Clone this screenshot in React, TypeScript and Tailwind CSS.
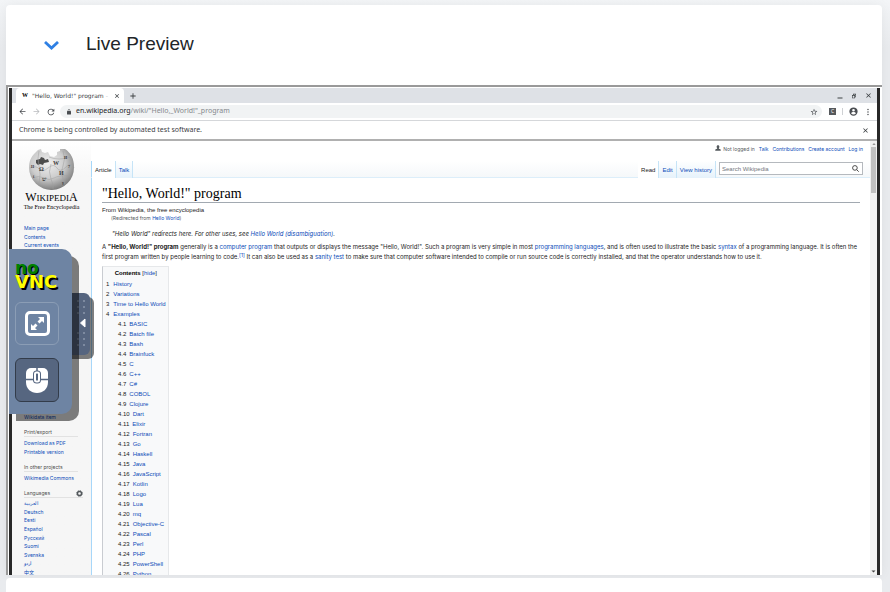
import type { ReactNode } from "react";

const ui = "font-['Noto_Sans','DejaVu_Sans',sans-serif]";
const side = "font-['Inter','Noto_Sans_CJK_SC',sans-serif] text-[5px]";
const arial = "font-['Liberation_Sans',Arial,sans-serif]";

function A({ children }: { children: ReactNode }) {
  return (
    <a href="#" className="text-[#0b4bb8]">
      {children}
    </a>
  );
}

function Icon({ d, className = "size-2" }: { d: string; className?: string }) {
  return (
    <svg viewBox="0 0 24 24" className={`${className} shrink-0`} fill="currentColor" aria-hidden="true">
      <path d={d} />
    </svg>
  );
}

const icons = {
  back: "M20 11H7.8l5.6-5.6L12 4l-8 8 8 8 1.4-1.4L7.8 13H20z",
  forward: "M4 11h12.2l-5.6-5.6L12 4l8 8-8 8-1.4-1.4 5.6-5.6H4z",
  reload:
    "M17.65 6.35A8 8 0 1 0 19.73 14h-2.08A6 6 0 1 1 12 6c1.66 0 3.14.69 4.22 1.78L13 11h7V4z",
  lock: "M18 8h-1V6a5 5 0 0 0-10 0v2H6a2 2 0 0 0-2 2v10a2 2 0 0 0 2 2h12a2 2 0 0 0 2-2V10a2 2 0 0 0-2-2zM9 6a3 3 0 0 1 6 0v2H9z",
  star: "M22 9.24l-7.19-.62L12 2 9.19 8.63 2 9.24l5.46 4.73L5.82 21 12 17.27 18.18 21l-1.63-7.03zM12 15.4l-3.76 2.27 1-4.28-3.32-2.88 4.38-.38L12 6.1l1.71 4.04 4.38.38-3.32 2.88 1 4.28z",
  account:
    "M12 1a11 11 0 1 0 0 22 11 11 0 0 0 0-22zm0 4a3.6 3.6 0 1 1 0 7.2A3.6 3.6 0 0 1 12 5zm0 15a8 8 0 0 1-6.500-3.500c.5-2 4.400-3 6.500-3s6 1 6.500 3A8 8 0 0 1 12 20z",
  more: "M12 7a2.200 2.200 0 1 0 0-4.400A2.200 2.200 0 0 0 12 7zm0 7.200a2.200 2.200 0 1 0 0-4.400 2.200 2.200 0 0 0 0 4.400zm0 7.200a2.200 2.200 0 1 0 0-4.400 2.200 2.200 0 0 0 0 4.400z",
  close: "M20 5.800L18.200 4 12 10.200 5.800 4 4 5.800 10.200 12 4 18.200 5.800 20l6.200-6.200 6.200 6.200 1.800-1.800-6.200-6.200z",
  plus: "M20 13.300h-6.700V20h-2.600v-6.700H4v-2.600h6.700V4h2.600v6.700H20z",
  minimize: "M2 18h20v4H2z",
  restore: "M8 3h12v14h-4v4H4V8h4zm2.500 5H16v6.500h1.500v-9h-7zM6.500 10.500v8h7v-8z",
  person: "M12 1c3.500 0 5.500 2.500 5.500 6 0 2.500-1 4.500-2 5.500v2l6 2.500c1 .5 1.500 2 1.500 6H1c0-4 .5-5.500 1.500-6l6-2.500v-2c-1-1-2-3-2-5.500 0-3.500 2-6 5.500-6z",
};

function TabStrip() {
  return (
    <div className="flex h-[15px] items-center bg-[#dee1e6] pl-1 text-[#3c4043]">
      <div className="flex h-full w-[108px] items-center rounded-t-[4px] bg-white pr-1 pl-[6px]">
        <span className="w-[10px] font-['Liberation_Serif',serif] text-[6px] font-bold text-black">W</span>
        <span className="mr-[2px] flex min-w-0 flex-1 gap-[2px] overflow-hidden font-['DejaVu_Sans',sans-serif] text-[6px] whitespace-nowrap">
          "Hello, World!" program <span className="text-[#c5c8cc]">-</span>
        </span>
        <button type="button" aria-label="Close tab">
          <Icon d={icons.close} className="size-[6px]" />
        </button>
      </div>
      <button type="button" aria-label="New tab" className="ml-[5px]">
        <Icon d={icons.plus} className="size-2" />
      </button>
      <div className="ml-auto flex items-center gap-2 pr-[5px]">
        <button type="button" aria-label="Minimize"><Icon d={icons.minimize} className="size-[6px]" /></button>
        <button type="button" aria-label="Restore"><Icon d={icons.restore} className="size-[6px]" /></button>
        <button type="button" aria-label="Close window"><Icon d={icons.close} className="size-[7px]" /></button>
      </div>
    </div>
  );
}

function Toolbar() {
  return (
    <div className="flex h-[18px] items-center border-b border-[#d5d7da] bg-white pr-[5px] pl-[6px] text-[#4a4d51]">
      <div className="flex gap-[5px]">
        <button type="button" aria-label="Back"><Icon d={icons.back} className="size-[9px]" /></button>
        <button type="button" aria-label="Forward" className="text-[#b9bbbe]"><Icon d={icons.forward} className="size-[9px]" /></button>
        <button type="button" aria-label="Reload"><Icon d={icons.reload} className="size-[10px]" /></button>
      </div>
      <div className="ml-1 flex h-[13px] min-w-0 flex-1 items-center gap-1 rounded-full bg-[#f1f3f4] pr-1 pl-[6px]">
        <Icon d={icons.lock} className="size-[6px]" />
        <div className="flex-1 text-[7px] whitespace-nowrap text-[#85888c]">
          <span className="text-[#202124]">en.wikipedia.org</span>/wiki/"Hello,_World!"_program
        </div>
        <button type="button" aria-label="Bookmark"><Icon d={icons.star} className="size-[8px]" /></button>
      </div>
      <span className="ml-[7px] flex size-[7px] items-center justify-center bg-[#56595c] text-[5px] text-white">C</span>
      <span className="mx-[6px] h-[7px] w-px bg-[#cfd1d4]" />
      <button type="button" aria-label="Profile"><Icon d={icons.account} className="size-[9px]" /></button>
      <button type="button" aria-label="Menu" className="ml-[6px]"><Icon d={icons.more} className="size-2" /></button>
    </div>
  );
}

function Globe() {
  return (
    <svg viewBox="0 0 46 42" className="h-[42px] w-[46px]" aria-label="Wikipedia globe">
      <defs>
        <radialGradient id="ball" cx="0.42" cy="0.35" r="0.68">
          <stop offset="0" stopColor="#efefef" />
          <stop offset="0.55" stopColor="#cccccc" />
          <stop offset="1" stopColor="#777777" />
        </radialGradient>
      </defs>
      <path
        d="M6 5l3-3 3-1 1 3 3 1 3-1 2 4 4 1 3-2 0-3 3-1 0-2 5 0c6 4 9 10 9 18a22.500 22.500 0 0 1-45 1C0 13 2 9 6 5z"
        fill="url(#ball)"
      />
      <path d="M7 12l4-1 1-2 3 1 1 2 3-1 1 3-5 1-1 2-3-1-2 1-2-2z" fill="#4c4c4c" />
      <g fill="none" stroke="#9f9f9f" strokeWidth="0.5">
        <path d="M1 20q6-3 9 1t9-1 9 0 9-1 8 1M3 30q7-3 12 0t10 0 16-2M10 3q-2 7 0 15t0 18M22 16q-3 8 0 15t2 10M34 3q3 8 0 15t2 18M20 9q9 4 22 0" />
      </g>
      <g fill="#3a3a3a" fontFamily="Liberation Serif" fontWeight="bold" fontSize="6">
        <text x="10" y="23">Ω</text>
        <text x="24" y="17">W</text>
        <text x="30" y="27">И</text>
        <text x="13" y="33">ש</text>
        <text x="35" y="11" fontSize="4">И</text>
        <text x="39" y="20" fontSize="4">7</text>
        <text x="2" y="20" fontSize="4">H</text>
        <text x="4" y="30" fontSize="4">ί</text>
        <text x="33" y="36" fontSize="4">γ</text>
      </g>
    </svg>
  );
}

function Heading({ children }: { children: ReactNode }) {
  return (
    <h3 className="mr-[13px] flex h-[9px] items-center justify-between border-b border-[#e2e2e2] text-[#4d4d4d]">
      {children}
    </h3>
  );
}

function Sidebar() {
  const langs = ["العربية", "Deutsch", "Eesti", "Español", "Русский", "Suomi", "Svenska", "اردو", "中文"];
  return (
    <aside className={`w-[79px] shrink-0 bg-linear-to-b from-white to-[#f6f6f6] to-8% pl-3 leading-[8px] ${side}`}>
      <div className="-ml-3 flex flex-col items-center pt-[7px]">
        <Globe />
        <div className="font-['Liberation_Serif',serif] text-[9px] leading-[14px] whitespace-nowrap text-black">
          <span className="text-[12px]">W</span>IKIPEDI<span className="text-[12px]">A</span>
        </div>
        <div className="font-['Liberation_Serif',serif] text-[6px] leading-[5px] whitespace-nowrap text-black">
          The Free Encyclopedia
        </div>
      </div>
      <ul className="mt-[14px] flex h-[25px] flex-col justify-between">
        <li><A>Main page</A></li>
        <li><A>Contents</A></li>
        <li><A>Current events</A></li>
      </ul>
      <div className="mt-[164px]"><A>Wikidata item</A></div>
      <div className="mt-[7px]"><Heading>Print/export</Heading></div>
      <ul className="mt-[2px] flex h-[17px] flex-col justify-between">
        <li><A>Download as PDF</A></li>
        <li><A>Printable version</A></li>
      </ul>
      <div className="mt-[7px]"><Heading>In other projects</Heading></div>
      <div className="mt-[2px]"><A>Wikimedia Commons</A></div>
      <div className="mt-[7px]">
        <h3 className="mr-2 flex h-[9px] items-center justify-between border-b border-[#e2e2e2] text-[#4d4d4d]">
          Languages
          <svg viewBox="0 0 24 24" className="size-[7px]" aria-hidden="true">
            <circle cx="12" cy="12" r="7" fill="none" stroke="#54595d" strokeWidth="5" />
            <circle cx="12" cy="12" r="10" fill="none" stroke="#54595d" strokeWidth="3" strokeDasharray="4 3.850" />
          </svg>
        </h3>
      </div>
      <ul className="mt-px flex h-[77px] flex-col justify-between">
        {langs.map((l) => (
          <li key={l} className="h-2"><A>{l}</A></li>
        ))}
      </ul>
    </aside>
  );
}

function ViewTab({ children, active = false }: { children: ReactNode; active?: boolean }) {
  return (
    <li
      className={`flex h-[17px] items-end border-r border-[#c6e4f7] px-[3px] pb-[4px] ${
        active ? "bg-white" : "bg-linear-to-b from-white to-[#e6f2fb]"
      }`}
    >
      {active ? <a href="#" className="text-[#222]">{children}</a> : <A>{children}</A>}
    </li>
  );
}

function PageHead() {
  return (
    <header className={`text-[6px] leading-[8px] ${arial}`}>
      <nav className="flex h-[20px] justify-end gap-1 bg-white pt-1 pr-[7px] font-['Inter',sans-serif] text-[5px]">
        <span className="flex gap-[2px] text-[#54595d]">
          <Icon d={icons.person} className="size-[6px]" />
          Not logged in
        </span>
        <A>Talk</A>
        <A>Contributions</A>
        <A>Create account</A>
        <A>Log in</A>
      </nav>
      <div className="flex h-[17px] border-b border-[#dceefa] bg-linear-to-b from-white to-[#f5f8fa]">
        <ul className="flex border-l border-[#a7d7f9]">
          <ViewTab active>Article</ViewTab>
          <ViewTab>Talk</ViewTab>
        </ul>
        <ul className="ml-auto flex">
          <ViewTab active>Read</ViewTab>
          <ViewTab>Edit</ViewTab>
          <ViewTab>View history</ViewTab>
        </ul>
        <label className="mt-px mr-[7px] ml-[3px] flex h-[13px] w-[144px] items-center border border-[#b5b9be] bg-white pr-[3px] pl-[2px] text-[#54595d]">
          <input
            type="text"
            aria-label="Search Wikipedia"
            placeholder="Search Wikipedia"
            className="h-[9px] min-w-0 flex-1 placeholder:text-[#72777d]"
          />
          <svg viewBox="0 0 24 24" className="size-[7px]" fill="none" stroke="#333" strokeWidth="3" aria-hidden="true">
            <circle cx="10" cy="10" r="8" />
            <path d="M16 16l7 7" />
          </svg>
        </label>
      </div>
    </header>
  );
}

const examples = [
  "BASIC", "Batch file", "Bash", "Brainfuck", "C", "C++", "C#", "COBOL", "Clojure", "Dart", "Elixir", "Fortran", "Go",
  "Haskell", "Java", "JavaScript", "Kotlin", "Logo", "Lua", "mq", "Objective-C", "Pascal", "Perl", "PHP", "PowerShell", "Python",
];

function Contents() {
  const top = ["History", "Variations", "Time to Hello World", "Examples"];
  return (
    <nav className={`mt-[4px] w-fit border border-[#e6e8ea] border-l-[#c9ccd1] bg-[#f8f9fa] pr-[2px] pl-[3px] text-[6px] leading-[10px] ${arial}`}>
      <div className="pt-px pb-px text-center">
        <b className="text-black">Contents</b> [<A>hide</A>]
      </div>
      <ol>
        {top.map((t, i) => (
          <li key={t} className="flex gap-[4px]">
            {i + 1} <A>{t}</A>
          </li>
        ))}
      </ol>
      <ol className="pl-3">
        {examples.map((t, i) => (
          <li key={t} className="flex gap-[3px]">
            4.{i + 1} <A>{t}</A>
          </li>
        ))}
      </ol>
    </nav>
  );
}

function Article() {
  return (
    <main className="flex-1 border-l border-[#a7d7f9] bg-white pr-[10px] pl-[10px] font-['Inter',sans-serif] text-[6px] text-[#222]">
      <h1 className="mt-[7px] h-[18px] border-b border-[#a2a9b1] font-['Liberation_Serif',serif] text-[14px] leading-[18px] text-black">
        "Hello, World!" program
      </h1>
      <div className={`mt-[3px] leading-[8px] ${arial}`}>From Wikipedia, the free encyclopedia</div>
      <div className="pl-[9px] text-[5px] leading-[8px] text-[#54595d]">
        (Redirected from <A>Hello World</A>)
      </div>
      <p className="mt-[7px] pl-[10px] leading-[10px] italic">
        "Hello World" redirects here. For other uses, see <A>Hello World (disambiguation)</A>.
      </p>
      <p className="mt-[3px] leading-[10px]">
        A <b>"Hello, World!" program</b> generally is a <A>computer program</A> that outputs or displays the message "Hello,
        World!". Such a program is very simple in most <A>programming languages</A>, and is often used to illustrate the
        basic <A>syntax</A> of a programming language. It is often the first program written by people learning to code.
        <sup className="text-[5px] leading-[0px]"><A>[1]</A></sup> It can also be used as a <A>sanity test</A> to make
        sure that computer software intended to compile or run source code is correctly installed, and that the operator
        understands how to use it.
      </p>
      <Contents />
    </main>
  );
}

function Scrollbar() {
  return (
    <div className="flex w-[7px] shrink-0 flex-col items-center bg-[#f1f1f1]">
      <svg viewBox="0 0 7 7" className="size-[6px]" aria-hidden="true"><path d="M1.500 4.500h4L3.500 2.500z" fill="#777" /></svg>
      <div className="h-[46px] w-[5px] bg-[#c1c1c1]" />
      <svg viewBox="0 0 7 7" className="mt-auto size-[7px]" aria-hidden="true"><path d="M1.500 2.500h4l-2 2z" fill="#444" /></svg>
    </div>
  );
}

function ControlBar() {
  return (
    <div className="absolute top-[162px] left-0">
      <button
        type="button"
        aria-label="Toggle control bar"
        className="absolute top-[44px] left-[55px] flex h-[62px] w-[26px] items-center justify-end rounded-r-[6px] bg-[#56657f] pr-px shadow-[4px_4px_0_rgba(0,0,0,0.5)]"
      >
        <svg viewBox="0 0 15 56" className="h-[56px] w-[15px]" aria-hidden="true">
          <g fill="#7d8aa0">
            {[4, 10, 16, 36, 42, 48].map((y) => (
              <g key={y}>
                <rect x="3" y={y} width="2" height="2" />
                <rect x="9" y={y} width="2" height="2" />
              </g>
            ))}
          </g>
          <path d="M6.500 27L11 23v8z" fill="#fff" stroke="#fff" strokeLinejoin="round" />
        </svg>
      </button>
      <div className="relative flex h-[165px] w-[63px] flex-col rounded-r-[10px] bg-[#6e84a3] pt-[13px] pl-[6px] shadow-[7px_7px_0_rgba(0,0,0,0.5)]">
        <div className="font-['DejaVu_Sans',sans-serif] leading-[13px] font-bold">
          <div className="text-[17px] text-[#008000] [text-shadow:1px_1px_0_#000]">no</div>
          <div className="text-[18px] text-[#ffff00] [text-shadow:2px_2px_0_#000]">VNC</div>
        </div>
        <button
          type="button"
          aria-label="Fullscreen"
          className="mt-[14px] flex h-[43px] w-[44px] items-center justify-center rounded-[6px] border border-[#8b9db5]"
        >
          <svg viewBox="0 0 25 25" className="size-[25px]" aria-hidden="true">
            <rect x="1.500" y="1.500" width="22" height="22" rx="3.500" fill="none" stroke="#fff" strokeWidth="3" />
            <path d="M13 6h6v6l-2-2-2.500 2.500-2-2L15 8zM6 13l2 2 2.500-2.500 2 2L10 17l2 2H6z" fill="#fff" />
          </svg>
        </button>
        <button
          type="button"
          aria-label="Mouse mode"
          className="mt-[13px] flex h-[44px] w-[44px] items-center justify-center rounded-[6px] border border-[#333c4a] bg-[#566680]"
        >
          <svg viewBox="0 0 22 25" className="h-[25px] w-[22px]" aria-hidden="true">
            <path d="M5 0h12a5 5 0 0 1 5 5v9c0 7-5 11-11 11S0 21 0 14V5a5 5 0 0 1 5-5z" fill="#fff" />
            <path d="M0 11.500h22M11 0v6" stroke="#566680" strokeWidth="1.500" />
            <rect x="7" y="2.500" width="8" height="13" rx="3.500" fill="#566680" />
            <rect x="9" y="4.500" width="4" height="9" rx="1.500" fill="#566680" stroke="#fff" strokeWidth="2" />
          </svg>
        </button>
      </div>
    </div>
  );
}

export default function App() {
  return (
    <div className="flex h-screen flex-col gap-[3px] overflow-hidden bg-linear-to-b from-[#f3f5f7] to-[#e9ebee] to-8% pt-[5px] pr-2 pl-[6px]">
      <section className="rounded-t-[4px] bg-white shadow-[0_0_12px_rgba(0,0,0,0.05)]">
        <h2 className="flex h-[80px] items-center pb-px pl-[38px] font-['Liberation_Sans',Arial,sans-serif] text-[19px] text-[#212529]">
          <button type="button" aria-label="Collapse Live Preview" className="mt-[2px] mr-[27px]">
            <svg viewBox="0 0 15 9" className="h-[9px] w-[15px]" aria-hidden="true">
              <path d="M1 1l6.500 6L14 1" fill="none" stroke="#2f80e4" strokeWidth="2.800" />
            </svg>
          </button>
          Live Preview
        </h2>
        <div className="relative border-t-2 border-l-2 border-[#999] bg-white pt-px pr-[2px] pl-px">
          <div className={`relative flex h-[487px] flex-col overflow-hidden border-x-3 border-[#282828] bg-white ${ui}`}>
            <TabStrip />
            <Toolbar />
            <div className="flex h-[20px] shrink-0 items-center justify-between border-b-2 border-[#b0b0b0] pr-2 pl-[7px] text-[7px] text-[#3c4043]">
              Chrome is being controlled by automated test software.
              <button type="button" aria-label="Dismiss"><Icon d={icons.close} className="size-[7px]" /></button>
            </div>
            <div className="flex min-h-0 flex-1">
              <Sidebar />
              <div className="flex min-w-0 flex-1 flex-col">
                <PageHead />
                <Article />
              </div>
              <Scrollbar />
            </div>
          </div>
          <div className="absolute top-0 left-px"><ControlBar /></div>
        </div>
      </section>
      <section className="flex-1 rounded-t-[4px] bg-white" />
    </div>
  );
}
